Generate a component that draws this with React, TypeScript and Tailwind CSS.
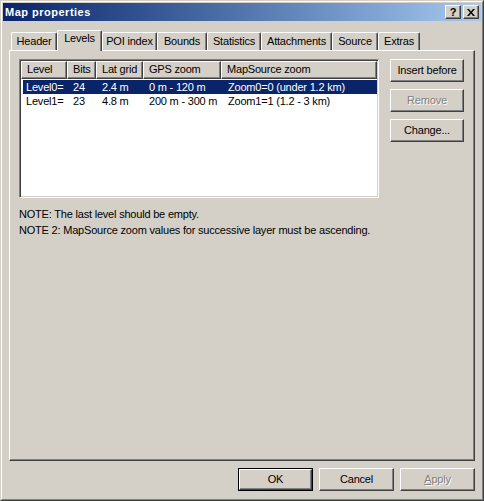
import type { ReactNode } from "react";

const raised =
  "border border-t-white border-l-white border-b-[#404040] border-r-[#404040] shadow-[inset_-1px_-1px_0_#808080]";

const tabs = [
  { label: "Header", w: "w-[46px]" },
  { label: "Levels", w: "w-[45px]", active: true },
  { label: "POI index", w: "w-[55px]" },
  { label: "Bounds", w: "w-[50px]" },
  { label: "Statistics", w: "w-[54px]" },
  { label: "Attachments", w: "w-[71px]" },
  { label: "Source", w: "w-[46px]" },
  { label: "Extras", w: "w-[42px]" },
];

const columns = [
  { label: "Level", w: "w-[46px]", rw: "w-[44px] pl-[3px]" },
  { label: "Bits", w: "w-[29px]", rw: "w-[29px] pl-[6px]" },
  { label: "Lat grid", w: "w-[47px]", rw: "w-[47px] pl-[6px]" },
  { label: "GPS zoom", w: "w-[78px]", rw: "w-[78px] pl-[6px]" },
  { label: "MapSource zoom", w: "w-[156px]", rw: "w-[156px] pl-[7px]" },
];

const rows = [
  ["Level0=", "24", "2.4 m", "0 m - 120 m", "Zoom0=0 (under 1.2 km)"],
  ["Level1=", "23", "4.8 m", "200 m - 300 m", "Zoom1=1 (1.2 - 3 km)"],
];

function Button({
  children,
  className = "",
  disabled,
  isDefault,
}: {
  children: ReactNode;
  className?: string;
  disabled?: boolean;
  isDefault?: boolean;
}) {
  const text = disabled ? "text-[#808080] [text-shadow:1px_1px_0_#ffffff]" : "text-black";
  const face = (
    <div className={`flex h-full w-full items-center justify-center leading-[13px] ${raised} ${text}`}>
      {children}
    </div>
  );
  if (isDefault) {
    return <div className={`border border-black ${className}`}>{face}</div>;
  }
  return <div className={className}>{face}</div>;
}

function TitleBar() {
  return (
    <div className="flex h-[18px] items-center justify-between bg-linear-to-r from-[#0a246a] to-[#a6caf0] pl-[2px] pr-[2px]">
      <span className="text-[11px] font-bold tracking-[0.5px] text-white leading-[13px]">Map properties</span>
      <div className="flex gap-[2px]">
        <div className={`flex h-[14px] w-[16px] items-center justify-center bg-[#d4d0c8] ${raised}`}>
          <span className="text-[11px] font-bold leading-[11px]">?</span>
        </div>
        <div className={`flex h-[14px] w-[16px] items-center justify-center bg-[#d4d0c8] ${raised}`}>
          <svg width="8" height="7" viewBox="0 0 8 7">
            <path d="M0 0h2l2 2.4 2-2.4h2l-3 3.5 3 3.5h-2l-2-2.4-2 2.4h-2l3-3.5z" fill="#000" />
          </svg>
        </div>
      </div>
    </div>
  );
}

function TabStrip() {
  return (
    <div className="flex h-[20px] items-end pl-[2px]">
      {tabs.map((t) =>
        t.active ? (
          <div
            key={t.label}
            className={`relative z-10 -mb-px flex h-[21px] ${t.w} justify-center rounded-t-[2px] border-t border-l border-r border-t-white border-l-white border-r-[#404040] bg-[#d4d0c8] pt-[1px] leading-[13px] shadow-[inset_-1px_0_0_#808080]`}
          >
            {t.label}
          </div>
        ) : (
          <div
            key={t.label}
            className={`flex h-[18px] ${t.w} justify-center rounded-t-[2px] border-t border-l border-r border-t-white border-l-white border-r-[#404040] pt-[2px] leading-[13px] shadow-[inset_-1px_0_0_#808080]`}
          >
            {t.label}
          </div>
        ),
      )}
    </div>
  );
}

function LevelList() {
  return (
    <div className="flex h-[139px] w-[360px] flex-col border border-t-[#808080] border-l-[#808080] border-b-white border-r-white bg-white shadow-[inset_1px_1px_0_#404040,inset_-1px_-1px_0_#d4d0c8] p-px">
      <div className="flex h-[18px] bg-[#d4d0c8]">
        {columns.map((c) => (
          <div key={c.label} className={`${c.w} ${raised} pl-[5px] pt-[1px] leading-[13px] whitespace-nowrap overflow-hidden`}>
            {c.label}
          </div>
        ))}
      </div>
      <div className="mt-px flex flex-col pl-[2px]">
        {rows.map((r, i) => (
          <div key={r[0]} className={`flex h-[14px] leading-[14px] ${i === 0 ? "bg-[#0a246a] text-white" : "text-black"}`}>
            {r.map((cell, j) => (
              <div key={j} className={`${columns[j].rw} whitespace-nowrap`}>
                {cell}
              </div>
            ))}
          </div>
        ))}
      </div>
    </div>
  );
}

export default function App() {
  return (
    <div className="h-[501px] w-[484px] border border-t-[#d4d0c8] border-l-[#d4d0c8] border-b-[#404040] border-r-[#404040] bg-[#d4d0c8] font-['Liberation_Sans',Arial,sans-serif] text-[11px] tracking-[-0.2px] text-black">
      <div className="flex h-full flex-col border border-t-white border-l-white border-b-[#808080] border-r-[#808080] p-px">
        <TitleBar />
        <div className="mx-[6px] mt-[9px] flex flex-col">
          <TabStrip />
          <div className={`flex h-[411px] flex-col pl-[9px] pt-[8px] ${raised}`}>
            <div className="flex gap-[11px]">
              <LevelList />
              <div className="flex flex-col gap-[7px]">
                <Button className="h-[23px] w-[74px]">Insert before</Button>
                <Button className="h-[23px] w-[74px]" disabled>
                  Remove
                </Button>
                <Button className="h-[23px] w-[74px]">Change...</Button>
              </div>
            </div>
            <p className="mt-[10px] leading-[13px]">NOTE: The last level should be empty.</p>
            <p className="mt-[3px] leading-[13px]">NOTE 2: MapSource zoom values for successive layer must be ascending.</p>
          </div>
          <div className="mt-[7px] flex justify-end gap-[6px]">
            <Button className="h-[23px] w-[75px]" isDefault>
              OK
            </Button>
            <Button className="h-[23px] w-[75px]">Cancel</Button>
            <Button className="h-[23px] w-[75px]" disabled>
              <span>
                <span className="underline">A</span>pply
              </span>
            </Button>
          </div>
        </div>
      </div>
    </div>
  );
}
